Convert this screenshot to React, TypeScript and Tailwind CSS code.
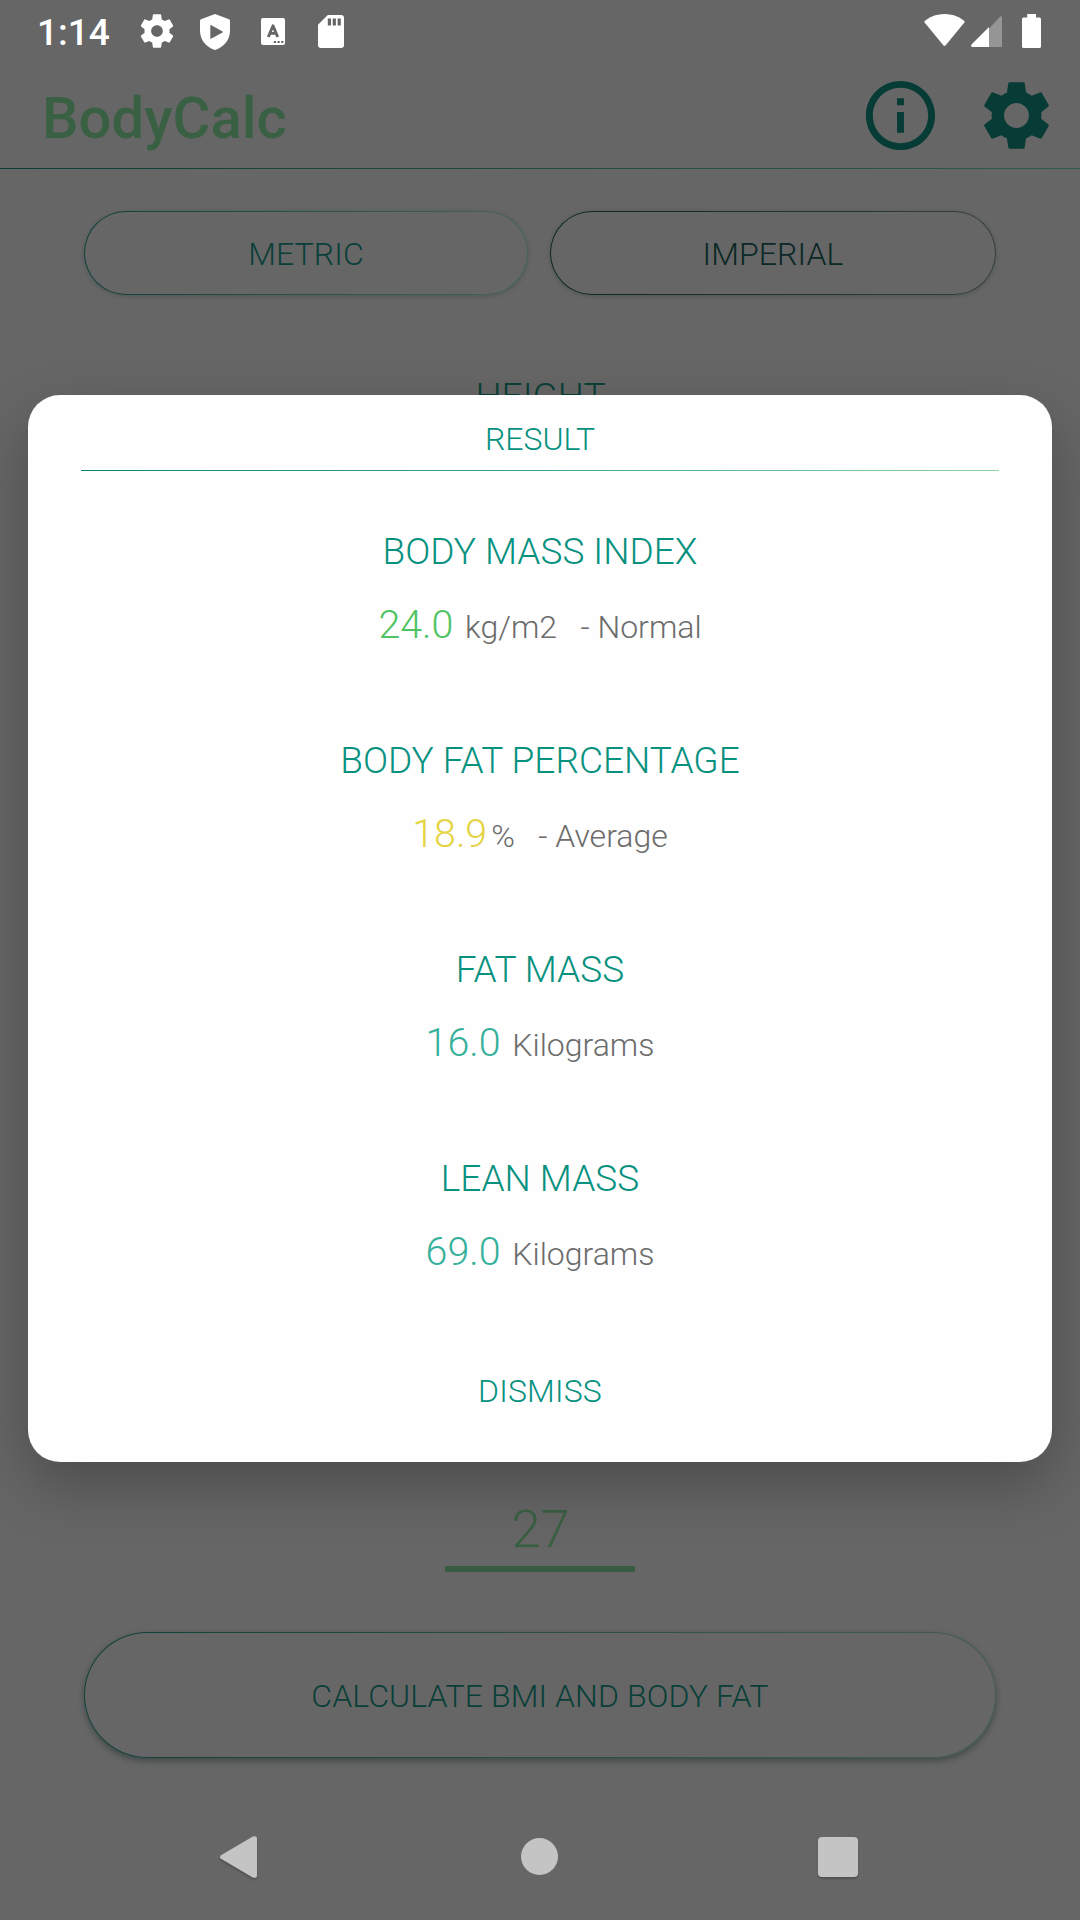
import React from "react";
import { MdSettings, MdOutlineInfo } from "react-icons/md";

type Result = { title: string; value: string; color: string; detail: string };

const results: Result[] = [
  { title: "BODY MASS INDEX", value: "24.0", color: "text-[#4fc463]", detail: " kg/m2   - Normal" },
  { title: "BODY FAT PERCENTAGE", value: "18.9", color: "text-[#e4d443]", detail: "%   - Average" },
  { title: "FAT MASS", value: "16.0", color: "text-[#35b09b]", detail: " Kilograms" },
  { title: "LEAN MASS", value: "69.0", color: "text-[#35b09b]", detail: " Kilograms" },
];

function StatusBar() {
  return (
    <div className="flex h-[63px] items-start justify-between text-white">
      <div className="flex pl-[37px] pt-[11px]">
        <span className="w-[100px] text-[37px] leading-[44px] font-medium">1:14</span>
        <svg className="h-[40px] w-[40px]" viewBox="0 0 24 24" fill="currentColor">
          <path d="M19.43 12.98c.04-.32.07-.64.07-.98s-.03-.66-.07-.98l2.11-1.65c.19-.15.24-.42.12-.64l-2-3.46c-.12-.22-.39-.3-.61-.22l-2.49 1c-.52-.4-1.08-.73-1.69-.98l-.38-2.65C14.46 2.18 14.25 2 14 2h-4c-.25 0-.46.18-.49.42l-.38 2.65c-.61.25-1.17.59-1.69.98l-2.49-1c-.23-.09-.49 0-.61.22l-2 3.46c-.13.22-.07.49.12.64l2.11 1.65c-.04.32-.07.65-.07.98s.03.66.07.98l-2.11 1.65c-.19.15-.24.42-.12.64l2 3.46c.12.22.39.3.61.22l2.49-1c.52.4 1.08.73 1.69.98l.38 2.65c.03.24.24.42.49.42h4c.25 0 .46-.18.49-.42l.38-2.65c.61-.25 1.17-.59 1.69-.98l2.49 1c.23.09.49 0 .61-.22l2-3.46c.12-.22.07-.49-.12-.64l-2.11-1.65zM12 15.5c-1.93 0-3.5-1.57-3.5-3.5s1.57-3.5 3.5-3.5 3.5 1.57 3.5 3.5-1.57 3.5-3.5 3.5z" />
        </svg>
        <svg className="mt-[3px] ml-[23px] h-[36px] w-[30px]" viewBox="0 0 30 36" fill="currentColor" fillRule="evenodd">
          <path d="M15 0L29 5.3Q30 5.7 30 7V16.5C30 26 24 33 15 36C6 33 0 26 0 16.5V7Q0 5.7 1 5.3ZM10.3 11.6V24.4Q10.6 25 11.4 24.6L22.6 18.6Q23.3 18 22.6 17.4L11.4 11.2Q10.6 10.9 10.3 11.6Z" />
        </svg>
        <svg className="mt-[7px] ml-[31px] h-[27px] w-[24px]" viewBox="0 0 24 27">
          <rect width="24" height="27" rx="2" fill="currentColor" />
          <path d="M7.3 19L12 7.8L16.7 19M9 15.4H15" fill="none" stroke="#666" strokeWidth="2.9" strokeLinejoin="round" />
          <path d="M12.8 22.9h2.2v2h-2.2zM16.5 22.9h2.2v2h-2.2zM20.2 22.9h2.2v2h-2.2z" fill="#666" />
        </svg>
        <svg className="mt-[4px] ml-[33px] h-[33px] w-[26px]" viewBox="0 0 26 33">
          <path d="M9.8 0H23Q26 0 26 3V30Q26 33 23 33H3Q0 33 0 30V9.8Z" fill="currentColor" />
          <path d="M9.8 3.5h3.2v7h-3.2zM14.7 3.5h3.2v7h-3.2zM19.6 3.5h3.2v7h-3.2z" fill="#666" />
        </svg>
      </div>
      <div className="flex pt-[14px] pr-[39px]">
        <svg className="h-[32px] w-[41px]" viewBox="0 0 41 32" fill="currentColor">
          <path d="M20.5 0C30 0 36 3.7 40.3 7.1Q41 7.8 40.4 8.6L21.7 31.2Q20.5 32.6 19.3 31.2L.6 8.6Q0 7.8.7 7.1C5 3.7 11 0 20.5 0Z" />
        </svg>
        <svg className="mt-[2px] ml-[6px] h-[31px] w-[31px]" viewBox="0 0 31 31" fill="currentColor">
          <path d="M18 12.5L29.3.6Q31-.5 31 1.5V31H18Z" fill="#959595" />
          <path d="M18 11V31H1Q-.5 30.5.5 28.5Z" />
        </svg>
        <svg className="ml-[20px] h-[34px] w-[19px]" viewBox="0 0 19 34" fill="currentColor">
          <path d="M5.2 0H14V3.5H17.5Q19 3.5 19 5V32.5Q19 34 17.5 34H1.5Q0 34 0 32.5V5Q0 3.5 1.5 3.5H5.2Z" />
        </svg>
      </div>
    </div>
  );
}

function AppScreen() {
  return (
    <div className="flex h-[1920px] flex-col bg-[#666666]">
      <StatusBar />
      <header className="flex h-[105px] items-center justify-between pr-[22px] pl-[42px] text-[#073c36]">
        <h1 className="mt-[4px] text-[58px] leading-[68px] font-medium text-[#3a6044]">BodyCalc</h1>
        <div className="flex gap-[33px]">
          <MdOutlineInfo size={83} />
          <MdSettings size={83} />
        </div>
      </header>
      <div className="h-px shrink-0 bg-linear-to-r from-[#0f3c37] to-[#2f5a4e]" />
      <div className="mt-[42px] flex justify-center gap-[22px] px-[84px] text-[32px] font-light tracking-[0.1px]">
        <button className="h-[84px] w-[444px] rounded-full border border-transparent [background:linear-gradient(#666,#666)_padding-box,linear-gradient(90deg,#103f39,#466459)_border-box] pt-[2px] text-[#0a3f38] shadow-[0_1px_4px_rgba(20,50,45,0.3)]">
          METRIC
        </button>
        <button className="h-[84px] w-[446px] rounded-full border border-transparent [background:linear-gradient(#666,#666)_padding-box,linear-gradient(90deg,#0c2724,#353e3d)_border-box] pt-[2px] text-[#0a2825] shadow-[0_1px_4px_rgba(20,50,45,0.3)]">
          IMPERIAL
        </button>
      </div>
      <div className="mt-[80px] h-[1124px] pl-[1px] text-center text-[37px] leading-[44px] font-light text-[#0a3f38]">
        HEIGHT
      </div>
      <div className="mx-auto flex w-[190px] flex-col">
        <span className="h-[67px] pl-[1px] text-center text-[52.5px] leading-[60px] font-light text-[#3a6044]">27</span>
        <span className="h-[6px] rounded-[1px] bg-[#375c41]" />
      </div>
      <button className="mx-[84px] mt-[60px] h-[126px] shrink-0 rounded-full border border-transparent [background:linear-gradient(#666,#666)_padding-box,linear-gradient(90deg,#103f39,#445d54)_border-box] pt-[2px] text-[32px] font-light tracking-[0.1px] text-[#0a3f38] shadow-[0_3px_6px_rgba(20,40,35,0.45)]">
        CALCULATE BMI AND BODY FAT
      </button>
      <nav className="mt-auto flex h-[126px] items-start justify-between pr-[222px] pl-[220px]">
        <svg className="mt-[42px] h-[42px] w-[37px] drop-shadow-[0_2px_1px_rgba(0,0,0,0.2)]" viewBox="0 0 37 42" fill="#c4c4c4">
          <path d="M1 19.2L32.8.6Q37-1 37 3V39Q37 43 32.8 41.4L1 22.8Q-1 21 1 19.2Z" />
        </svg>
        <span className="mt-[44px] ml-[3px] h-[37px] w-[37px] rounded-full bg-[#c4c4c4]" />
        <span className="mt-[43px] h-[40px] w-[40px] rounded-[4px] bg-[#c4c4c4] shadow-[0_2px_2px_rgba(0,0,0,0.2)]" />
      </nav>
    </div>
  );
}

function ResultDialog() {
  return (
    <div className="absolute inset-0 flex items-start justify-center overflow-hidden pt-[395px]">
      <section className="flex h-[1067px] w-[1024px] flex-col rounded-[32px] bg-[#fefefe] px-[53px] pt-[24px] text-center font-light text-[#07917f] shadow-[0_24px_60px_rgba(0,0,0,0.26)]">
        <h2 className="text-[32px] leading-[40px]">RESULT</h2>
        <div className="mt-[11px] h-px shrink-0 bg-linear-to-r from-[#078475] via-[#35a98f] to-[#8fd0a5]" />
        <div className="mt-[56px] flex flex-col gap-[85px]">
          {results.map((r) => (
            <div key={r.title}>
              <h3 className="text-[37px] leading-[50px]">{r.title}</h3>
              <p className="mt-[23px] h-[51px] text-[39.375px] leading-[50px] whitespace-pre">
                <span className={r.color}>{r.value}</span>
                <span className="ml-[4px] text-[32px] text-[#6c6c6c]">{r.detail}</span>
              </p>
            </div>
          ))}
        </div>
        <button className="mt-[93px] text-[32px] leading-[40px] tracking-[0.2px]">DISMISS</button>
      </section>
    </div>
  );
}

export default function App() {
  return (
    <main className="relative h-[1920px] w-[1080px] overflow-hidden font-['Roboto',sans-serif]">
      <AppScreen />
      <ResultDialog />
    </main>
  );
}
